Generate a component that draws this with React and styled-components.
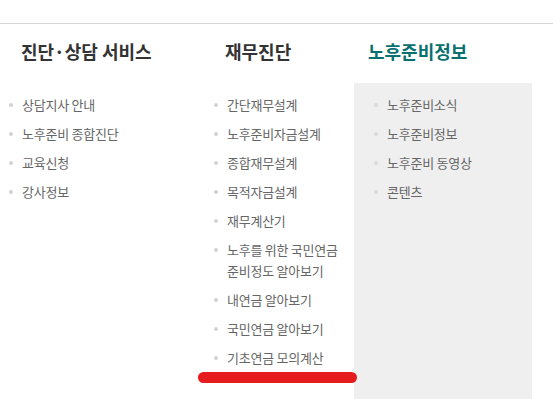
import React from "react";
import styled, { createGlobalStyle } from "styled-components";

const GlobalStyle = createGlobalStyle`
  html, body { margin: 0; padding: 0; background: #fff; }
  body { font-family: "Noto Sans CJK KR", "Noto Sans", sans-serif; }
`;

const menus = [
  {
    title: "진단·상담 서비스",
    items: ["상담지사 안내", "노후준비 종합진단", "교육신청", "강사정보"],
    width: 198, headPad: 21, listPad: 9,
  },
  {
    title: "재무진단",
    items: [
      "간단재무설계", "노후준비자금설계", "종합재무설계", "목적자금설계", "재무계산기",
      "노후를 위한 국민연금\n준비정도 알아보기", "내연금 알아보기", "국민연금 알아보기", "기초연금 모의계산",
    ],
    width: 156, headPad: 27, listPad: 16,
  },
  {
    title: "노후준비정보",
    items: ["노후준비소식", "노후준비정보", "노후준비 동영상", "콘텐츠"],
    width: 178, headPad: 14, listPad: 20, active: true,
  },
];

const App = () => {
  return (
    <Page>
      <GlobalStyle />
      <Menu>
        {menus.map((m) => (
          <Column key={m.title} $w={m.width}>
            <Heading $pad={m.headPad} $active={m.active}>{m.title}</Heading>
            <List $pad={m.listPad} $active={m.active}>
              {m.items.map((it) => (
                <Item key={it} $active={m.active}>
                  <span>{it}</span>
                </Item>
              ))}
            </List>
          </Column>
        ))}
      </Menu>
      <Mark />
    </Page>
  );
};

export default App;

const Page = styled.div`
  position: relative;
  height: 100vh;
  display: flex;
  flex-direction: column;
  padding-top: 23px;
  box-sizing: border-box;
  overflow: hidden;
`;

const Menu = styled.div`
  flex: 1;
  display: flex;
  border-top: 1px solid #d6d6d6;
`;

const Column = styled.div`
  width: ${(p) => p.$w}px;
  display: flex;
  flex-direction: column;
`;

const Heading = styled.h3`
  margin: 0;
  height: 59px;
  box-sizing: border-box;
  padding: 14px 0 0 ${(p) => p.$pad}px;
  font-size: 18px;
  line-height: 26px;
  font-weight: 700;
  letter-spacing: 0;
  color: ${(p) => (p.$active ? "#08706f" : "#333")};
  white-space: nowrap;
`;

const List = styled.ul`
  flex: 1;
  list-style: none;
  margin: 0;
  padding: 11px 0 0 ${(p) => p.$pad}px;
  background: ${(p) => (p.$active ? "#efefef" : "transparent")};
`;

const Item = styled.li`
  display: flex;
  align-items: flex-start;
  margin-bottom: 8px;
  font-size: 13px;
  line-height: 21px;
  letter-spacing: -0.25px;
  color: #666;
  white-space: pre-line;

  &::before {
    content: "";
    flex: none;
    width: 4px;
    height: 4px;
    margin: 9px 9px 0 0;
    border-radius: 50%;
    background: ${(p) => (p.$active ? "#dadada" : "#d3d3d3")};
  }
`;

const Mark = styled.div`
  position: absolute;
  left: 198px;
  top: 372px;
  width: 159px;
  height: 11px;
  border-radius: 6px;
  background: #e61b1e;
`;
